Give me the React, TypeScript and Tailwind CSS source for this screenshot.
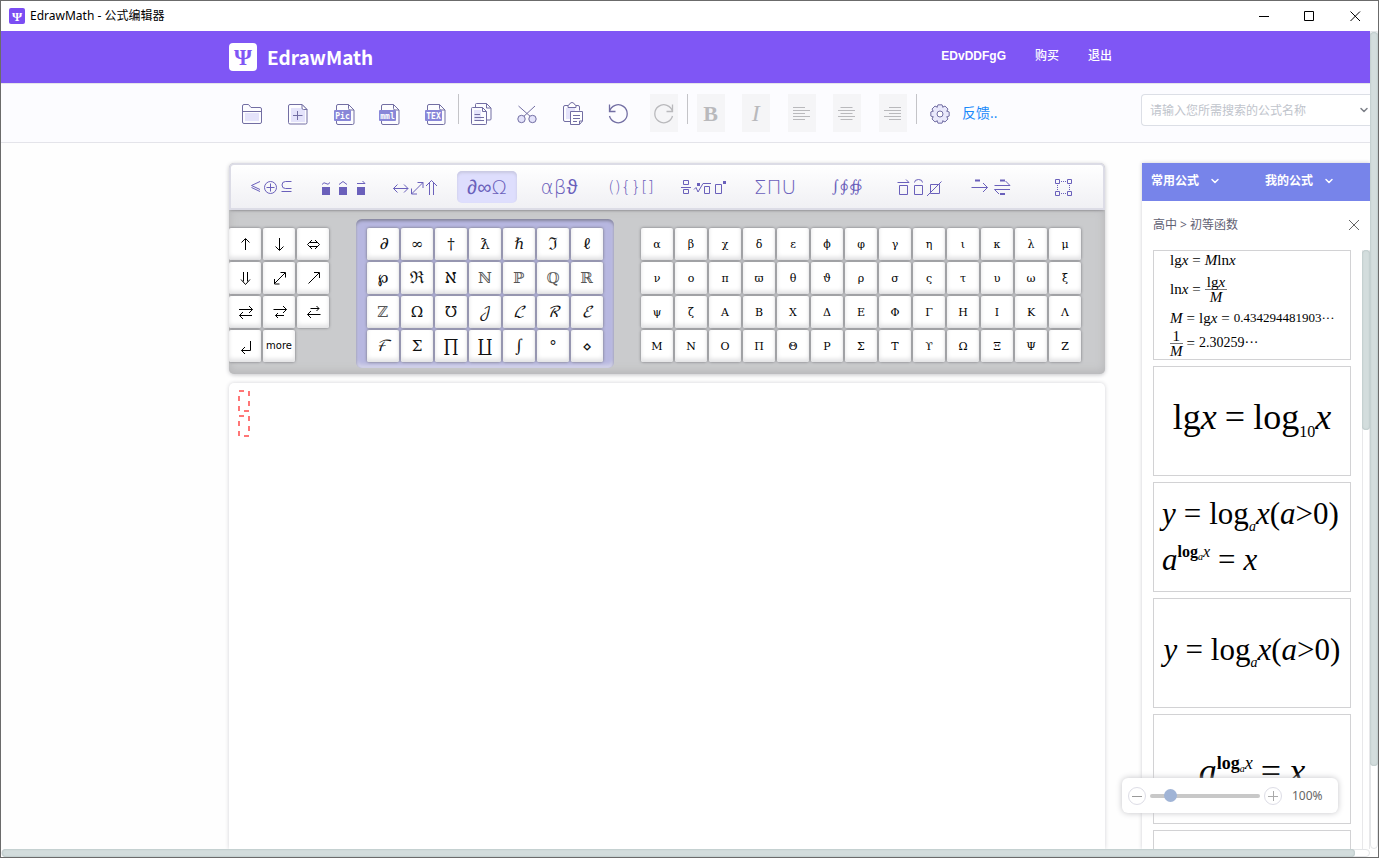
import React, { useState } from "react";
import { ChevronDown } from "lucide-react";
import clsx from "clsx";

interface Tool {
  label: string;
  icon: React.ReactNode;
  disabled?: boolean;
  divider?: boolean;
}

interface PaletteTab {
  label: string;
  content: React.ReactNode;
}

const CJK = "font-['Open_Sans','Noto_Sans_CJK_SC',sans-serif]";

// Outline of the settings cog, eight teeth around (14, 15)
const GEAR_POINTS = Array.from({ length: 8 })
  .flatMap((_, i) => {
    const mid = (i * Math.PI) / 4;
    return [
      [-0.42, 7.4],
      [-0.22, 9.4],
      [0.22, 9.4],
      [0.42, 7.4],
    ].map(([da, r]) => {
      const x = 14 + r * Math.sin(mid + da);
      const y = 15 - r * Math.cos(mid + da);
      return `${x.toFixed(2)},${y.toFixed(2)}`;
    });
  })
  .join(" ");

function ToolIcon({ children, muted }: { children: React.ReactNode; muted?: boolean }) {
  return (
    <svg
      viewBox="0 0 28 28"
      fill="none"
      stroke={muted ? "#b9b9bc" : "#726ea3"}
      className="h-7 w-7"
      aria-hidden="true"
    >
      {children}
    </svg>
  );
}

function FileBadge({ text }: { text: string }) {
  return (
    <ToolIcon>
      <path d="M18.5 5.5H8a1.5 1.5 0 0 0-1.5 1.5V24a1.5 1.5 0 0 0 1.5 1.5H22.5a1.5 1.5 0 0 0 1.5-1.5V11z" />
      <path d="M18.5 5.5V9.5a1.5 1.5 0 0 0 1.5 1.5H24" />
      <rect x="4" y="11" width="17" height="11" rx="1" fill="#8987d8" stroke="none" />
      <text
        x="12.5"
        y="19.5"
        textAnchor="middle"
        fill="#fff"
        stroke="none"
        className="font-['DejaVu_Sans_Mono',monospace] text-[8px] font-bold"
      >
        {text}
      </text>
    </ToolIcon>
  );
}

function AlignIcon({ align }: { align: "left" | "center" | "right" }) {
  const widths = [12, 17, 12, 17, 12];
  return (
    <ToolIcon muted>
      {widths.map((w, i) => {
        const x = align === "left" ? 5 : align === "right" ? 22 - w : 13.5 - w / 2;
        return <path key={i} d={`M${x} ${8.5 + i * 3}h${w}`} />;
      })}
    </ToolIcon>
  );
}

const TOOLS: Tool[] = [
  {
    label: "打开",
    icon: (
      <ToolIcon>
        <rect x="7" y="14" width="14" height="8" fill="#e4e3fb" stroke="none" />
        <path d="M4.5 7a1.5 1.5 0 0 1 1.5-1.5H10.5L13 8.5H22a1.5 1.5 0 0 1 1.5 1.5V23a1.5 1.5 0 0 1-1.5 1.5H6A1.5 1.5 0 0 1 4.5 23zM4.5 12.5H23.5" />
      </ToolIcon>
    ),
  },
  {
    label: "新建",
    icon: (
      <ToolIcon>
        <rect x="7" y="9" width="14" height="14" fill="#e4e3fb" stroke="none" />
        <path d="M18 5.5H6a1.5 1.5 0 0 0-1.5 1.5V23.5A1.5 1.5 0 0 0 6 25H21.5A1.5 1.5 0 0 0 23 23.5V10.5z" />
        <path d="M18 5.5V9a1.5 1.5 0 0 0 1.5 1.5H23z" fill="#fff" />
        <path d="M9 16.5H18.5M13.5 12V21" />
      </ToolIcon>
    ),
  },
  { label: "导出图片", icon: <FileBadge text="Pic" /> },
  { label: "导出 MathML", icon: <FileBadge text="mml" /> },
  { label: "导出 TeX", icon: <FileBadge text="TEX" /> },
  {
    label: "复制",
    divider: true,
    icon: (
      <ToolIcon>
        <path d="M8.5 8V5.5a1 1 0 0 1 1-1H19.5L24 9V20a1 1 0 0 1-1 1H19.5M19.5 4.5V9H24" />
        <rect x="7" y="11" width="7" height="11" fill="#e4e3fb" stroke="none" />
        <path d="M15.5 8.5H5.5a1 1 0 0 0-1 1V24.5a1 1 0 0 0 1 1H18.5a1 1 0 0 0 1-1V12.5zM15.5 8.5V12.5H19.5" />
        <path d="M7.5 15.5H13M7.5 18.5H17M7.5 21.5H17" />
      </ToolIcon>
    ),
  },
  {
    label: "剪切",
    icon: (
      <ToolIcon>
        <circle cx="8.5" cy="20" r="3.7" fill="#e4e3fb" />
        <circle cx="19.5" cy="20" r="3.7" fill="#e4e3fb" />
        <path d="M5.5 7L17 17.2M22 7L11 17.2" />
      </ToolIcon>
    ),
  },
  {
    label: "粘贴",
    icon: (
      <ToolIcon>
        <rect x="7" y="9" width="9" height="11" fill="#e4e3fb" stroke="none" />
        <path d="M9 6.5H6a1.5 1.5 0 0 0-1.5 1.5V21A1.5 1.5 0 0 0 6 22.5H11M17 6.5H19A1.5 1.5 0 0 1 20.5 8V11.5" />
        <path d="M9 8.5V6.5L10.5 5.5Q11 3.5 13 3.5Q15 3.5 15.5 5.5L17 6.5V8.5z" fill="#fff" />
        <path d="M11.5 12.5H23.5V22L20.5 25.5H11.5z" fill="#fff" />
        <path d="M23.5 22H20.5V25.5M14 16.5H21M14 19.5H21M14 22.5H18" />
      </ToolIcon>
    ),
  },
  {
    label: "撤销",
    icon: (
      <ToolIcon>
        <path d="M5.5 5.5V12.5H11.5M5.5 12.5A9 9 0 1 1 5.5 17" strokeWidth="1.3" />
      </ToolIcon>
    ),
  },
  {
    label: "重做",
    disabled: true,
    icon: (
      <ToolIcon muted>
        <path d="M22.5 5.5V12.5H16.5M22.5 12.5A9 9 0 1 0 22.5 17" strokeWidth="1.3" />
      </ToolIcon>
    ),
  },
  {
    label: "加粗",
    disabled: true,
    divider: true,
    icon: <span className="font-['Liberation_Serif',serif] text-[22px] font-bold">B</span>,
  },
  {
    label: "斜体",
    disabled: true,
    icon: <span className="font-['Liberation_Serif',serif] text-2xl italic">I</span>,
  },
  { label: "左对齐", disabled: true, icon: <AlignIcon align="left" /> },
  { label: "居中", disabled: true, icon: <AlignIcon align="center" /> },
  { label: "右对齐", disabled: true, icon: <AlignIcon align="right" /> },
  {
    label: "设置",
    divider: true,
    icon: (
      <ToolIcon>
        <polygon points={GEAR_POINTS} fill="#e9e8fb" strokeLinejoin="round" />
        <circle cx="14" cy="15" r="3" fill="#fff" />
      </ToolIcon>
    ),
  },
];

function TabIcon({ children }: { children: React.ReactNode }) {
  return (
    <svg
      viewBox="-30 -16 60 32"
      fill="none"
      stroke="#6a60bb"
      className="h-8 w-[60px]"
      aria-hidden="true"
    >
      {children}
    </svg>
  );
}

const LIGHT = "font-['DejaVu_Sans_Light','DejaVu_Sans',sans-serif]";
const MATH = "font-['DejaVu_Math_TeX_Gyre','DejaVu_Serif',serif]";

function TabText({ children, className }: { children: React.ReactNode; className: string }) {
  return (
    <span className={clsx("leading-8 font-extralight whitespace-nowrap", className)}>
      {children}
    </span>
  );
}

const TABS: PaletteTab[] = [
  {
    label: "关系符号",
    content: (
      <TabIcon>
        <path d="M-11-5.5L-19.5-1.5L-11 2.5M-19.5.5L-11 4.5" />
        <circle cx="-.5" cy=".5" r="6" />
        <path d="M-4.5.5H3.5M-.5-3.5V4.5M20.5-5.5H14.5a3.5 3.5 0 0 0 0 7H20.5M10.5 4.5H20.5" />
      </TabIcon>
    ),
  },
  {
    label: "修饰符号",
    content: (
      <TabIcon>
        <path d="M-21 0h8v8h-8zM-4 0h8v8h-8zM14 0h8v8h-8z" fill="#6a60bb" stroke="none" />
        <path d="M-21-2.5q2-3 4-1t4-1M-4-2.5L0-5.5L4-2.5M14-3.5H22L19.5-6" />
      </TabIcon>
    ),
  },
  {
    label: "箭头符号",
    content: (
      <TabIcon>
        <path d="M-21.5 1.5H-7M-17.5-2.5L-21.5 1.5L-17.5 5.5M-11-2.5L-7 1.5L-11 5.5" />
        <path d="M-3.5 7L8-4.5M2.5-4.5H8V1M-3.5 1.5V7H2" />
        <path d="M14.5 8V-4M18.5 8V-4M11-1L16.5-6.5L22-1" />
      </TabIcon>
    ),
  },
  { label: "杂项符号", content: <TabText className={clsx(LIGHT, "text-xl")}>∂∞Ω</TabText> },
  { label: "希腊字母", content: <TabText className={clsx(LIGHT, "text-xl")}>αβϑ</TabText> },
  { label: "括号", content: <TabText className={clsx(LIGHT, "text-base")}>(){"{}"}[]</TabText> },
  {
    label: "分式和根式",
    content: (
      <TabIcon>
        <path d="M-19.5-6.5h5v4h-5zM-22 .5h10M-19.5 2.5h5v4h-5z" />
        <path d="M-9 2.5L-7 .5L-5 5L0-3.5H8M1.5-.5h5v7h-5zM12.5-2.5h6v9h-6z" />
        <path d="M-6-4h3v3h-3zM20-6h3v3h-3z" fill="#6a60bb" stroke="none" />
      </TabIcon>
    ),
  },
  { label: "求和", content: <TabText className={clsx(LIGHT, "text-xl")}>ΣΠU</TabText> },
  { label: "积分", content: <TabText className={clsx(MATH, "text-sm")}>∫∮∯</TabText> },
  {
    label: "上下划线",
    content: (
      <TabIcon>
        <path d="M-19.5-1.5h8v9h-8zM-4.5-1.5h8v9h-8zM11.5-2.5h9v9h-9z" />
        <path d="M-21.5-4.5H-10L-13-7.5M-4.5-4.5q0-3 4-3t4 3M8 9L22.5-5.5" />
      </TabIcon>
    ),
  },
  {
    label: "标签箭头",
    content: (
      <TabIcon>
        <path d="M-19.5.5H-3.5M-8-4L-3.5.5L-8 5M3.5-1.5H19L14.5-6M19 2.5H3.5L8 7" />
        <path d="M-16-6.5h5M9-6.5h5M9 7h5" strokeWidth="2" />
      </TabIcon>
    ),
  },
  {
    label: "矩阵",
    content: (
      <TabIcon>
        <path d="M-7.5-7.5h4v4h-4zM4.5-7.5h4v4h-4zM-7.5 4.5h4v4h-4zM4.5 4.5h4v4h-4z" />
        <path d="M-2-5.5H4M-2 6.5H4M-5.5-2V4M6.5-2V4" strokeDasharray="1 1" />
      </TabIcon>
    ),
  },
];

// Drawn on a 32px key, centre (16, 16)
const ARROW_KEYS = [
  { label: "上箭头", path: "M16.5 22V11M12.5 14.5L16.5 10.5L20.5 14.5" },
  { label: "下箭头", path: "M16.5 10V22M12.5 18.5L16.5 22.5L20.5 18.5" },
  { label: "双线左右箭头", path: "M12 14.5H21M12 18.5H21M15 12L10.5 16.5L15 21M18 12L22.5 16.5L18 21" },
  { label: "双线下箭头", path: "M14.5 10V19.5M18.5 10V19.5M12 17.5L16.5 22.5L21 17.5" },
  { label: "双向斜箭头", path: "M11.5 21.5L22 11M17.5 10.5H22.5V15.5M11.5 17V22H16.5" },
  { label: "斜箭头", path: "M11.5 21.5L22 11M17 10.5H22.5V16" },
  { label: "左右双箭头", path: "M10 13.5H23.5M20 10L23.5 13.5L20 17M23 19.5H10.5M14 16L10.5 19.5L14 23" },
  { label: "右长双箭头", path: "M10.5 13.5H23.5M20 10L23.5 13.5L20 17M21 19.5H12.5L15 22M12.5 19.5L15 17" },
  { label: "左长双箭头", path: "M13.5 12.5H22M19.5 10L22 12.5L19.5 15M23.5 18.5H10.5M14 15L10.5 18.5L14 22" },
  { label: "回车", path: "M21.5 11V20.5H12.5M16 17L12.5 20.5L16 24" },
];

const MISC_KEYS = [..."∂∞†ƛℏℑℓ℘ℜℵℕℙℚℝℤΩ℧𝒥ℒℛℰℱΣ∏∐∫°⋄"];
const SLANTED_KEYS = [..."∂ℒℛℰℱ"];
const DOUBLE_STRUCK_KEYS = [..."ℕℙℚℝℤ"];

const GREEK_KEYS = [..."αβχδεϕφγηικλμνοπϖθϑρσςτυωξψζΑΒΧΔΕΦΓΗΙΚΛΜΝΟΠΘΡΣΤϒΩΞΨΖ"];

function Key({
  label,
  className,
  children,
}: {
  label: string;
  className?: string;
  children: React.ReactNode;
}) {
  return (
    <button
      type="button"
      aria-label={label}
      className={clsx(
        "flex h-8 w-8 items-center justify-center rounded-xs bg-white leading-none shadow-[0_0_3px_#6e6e74,inset_0_-3px_4px_#e2e2e4]",
        className
      )}
    >
      {children}
    </button>
  );
}

function Palette() {
  const [active, setActive] = useState("杂项符号");

  return (
    <section className="overflow-hidden rounded-[5px] bg-[#cacbcd] shadow-[0_1px_4px_#c4c4c8]">
      <div className="grid h-[47px] grid-cols-12 items-center rounded-t-[5px] border-2 border-[#dcdce6] bg-linear-to-b from-white to-[#f0f0f4] px-1 shadow-[0_2px_2px_-1px_#8a8a8e]">
        {TABS.map((tab) => (
          <button
            key={tab.label}
            type="button"
            aria-label={tab.label}
            onClick={() => setActive(tab.label)}
            className={clsx(
              "mx-auto flex h-8 w-[60px] items-center justify-center rounded-[5px] text-[#6a60bb]",
              active === tab.label && "bg-[#dedefd] shadow-[inset_0_2px_3px_#c8c8e0]"
            )}
          >
            {tab.content}
          </button>
        ))}
      </div>

      <div className="flex h-[164px] items-start gap-[27px] pt-[9px] shadow-[inset_0_-2px_10px_#b4b4b6]">
        <div className="mt-[9px] grid shrink-0 grid-cols-3 gap-0.5">
          {ARROW_KEYS.map((key) => (
            <Key key={key.label} label={key.label}>
              <svg viewBox="0 0 32 32" fill="none" stroke="#000" className="h-8 w-8">
                <path d={key.path} />
              </svg>
            </Key>
          ))}
          <Key label="more" className="font-['DejaVu_Sans',sans-serif] text-[10px] text-black">
            more
          </Key>
        </div>

        <div className="grid shrink-0 grid-cols-7 gap-0.5 rounded-md bg-[#b7b7e0] px-[11px] pt-[9px] pb-1.5 shadow-[inset_0_2px_3px_#85859c,inset_0_-3px_4px_#d6d6ea]">
          {MISC_KEYS.map((char) => (
            <Key
              key={char}
              label={char}
              className={clsx(
                "font-['DejaVu_Math_TeX_Gyre','DejaVu_Serif','DejaVu_Sans',serif] text-[15px]",
                SLANTED_KEYS.includes(char) && "italic",
                DOUBLE_STRUCK_KEYS.includes(char) ? "text-[#555]" : "text-[#111]"
              )}
            >
              {char}
            </Key>
          ))}
        </div>

        <div className="mt-[9px] grid shrink-0 grid-cols-13 gap-0.5">
          {GREEK_KEYS.map((char) => (
            <Key key={char} label={char} className="font-['DejaVu_Serif',serif] text-[11px] text-black">
              {char}
            </Key>
          ))}
        </div>
      </div>
    </section>
  );
}

function Editor() {
  return (
    <section className="mt-[9px] flex-1 rounded-t-[5px] bg-white px-2 py-[7px] shadow-[0_0_4px_#d4d4d8]">
      <svg
        width="14"
        height="48"
        viewBox="0 0 14 48"
        stroke="#ff7676"
        strokeWidth="2"
        fill="none"
        aria-label="公式占位符"
      >
        <path d="M2 1H7M12 1V6M12 11V16M2 6V11M2 16V21M7 21H12" />
        <path d="M2 26H7M12 26V31M12 36V41M2 31V36M2 41V46M7 46H12" />
      </svg>
    </section>
  );
}

function Equals({ className = "mx-2" }: { className?: string }) {
  return <span className={className}>=</span>;
}

function Fraction({ top, bottom }: { top: React.ReactNode; bottom: React.ReactNode }) {
  return (
    <span className="flex flex-col text-center leading-[14px]">
      <span className="border-b border-[#777] px-0.5">{top}</span>
      <span>{bottom}</span>
    </span>
  );
}

function LogPower({ large }: { large?: boolean }) {
  return (
    <div className="flex items-center whitespace-nowrap">
      <i>a</i>
      <span className={clsx("self-start font-bold", large ? "text-lg leading-6" : "text-base leading-5")}>
        log
        <sub className="text-[10px] font-normal italic">a</sub>
        <i className="font-normal">x</i>
      </span>
      <Equals />
      <i>x</i>
    </div>
  );
}

function LogLine() {
  return (
    <div className="whitespace-nowrap">
      <i>y</i>
      <Equals />
      log
      <sub className="bottom-[-0.5em] text-sm leading-none italic">a</sub>
      <i>x</i>(<i>a</i>&gt;0)
    </div>
  );
}

const FORMULAS = [
  {
    id: "lg-ln",
    className: "flex flex-col pl-4 text-[15px] leading-[18px] whitespace-nowrap",
    body: (
      <>
        <div className="flex h-[18px] items-center">
          lg<i>x</i>
          <Equals className="mx-1" />
          <i>M</i>ln<i>x</i>
        </div>
        <div className="flex h-10 items-center">
          ln<i>x</i>
          <Equals className="mx-1" />
          <Fraction top={<>lg<i>x</i></>} bottom={<i>M</i>} />
        </div>
        <div className="flex h-[18px] items-center">
          <i>M</i>
          <Equals className="mx-1" />
          lg<i>x</i>
          <Equals className="mx-1" />
          <span className="text-[13px]">0.434294481903···</span>
        </div>
        <div className="flex h-8 items-center">
          <Fraction top="1" bottom={<i>M</i>} />
          <Equals className="mx-1" />
          <span className="text-sm">2.30259···</span>
        </div>
      </>
    ),
  },
  {
    id: "lg",
    className: "flex items-center justify-center pb-2 text-[36px] leading-10",
    body: (
      <div className="whitespace-nowrap">
        lg<i>x</i>
        <Equals />
        log
        <sub className="bottom-[-0.5em] text-base leading-none">10</sub>
        <i>x</i>
      </div>
    ),
  },
  {
    id: "log-pair",
    className: "flex flex-col justify-center gap-2.5 px-2 text-[31px] leading-9",
    body: (
      <>
        <LogLine />
        <LogPower />
      </>
    ),
  },
  {
    id: "log",
    className: "flex items-center justify-center pb-1.5 text-[31px] leading-9",
    body: <LogLine />,
  },
  {
    id: "power",
    className: "flex items-center justify-center pt-1 text-[36px] leading-10",
    body: <LogPower large />,
  },
  { id: "next", className: "", body: null },
];

function FormulaPanel() {
  return (
    <aside className={clsx("flex w-[228px] shrink-0 flex-col bg-white text-xs shadow-[0_0_4px_#cfcfd4]", CJK)}>
      <div className="flex h-[38px] items-center bg-[#7784ea] pb-0.5 font-bold text-white">
        <button type="button" className="flex w-1/2 items-center gap-2.5 pl-[9px]">
          常用公式
          <ChevronDown size={12} strokeWidth={3} />
        </button>
        <button type="button" className="flex w-1/2 items-center gap-2.5 pl-[9px]">
          我的公式
          <ChevronDown size={12} strokeWidth={3} />
        </button>
      </div>

      <div className="flex h-[49px] items-center justify-between px-[11px] pb-0.5 text-[#5f6173]">
        <span>高中 &gt; 初等函数</span>
        <button type="button" aria-label="关闭">
          <svg width="10" height="10" viewBox="0 0 10 10" stroke="#666">
            <path d="M0 0L10 10M10 0L0 10" />
          </svg>
        </button>
      </div>

      <div className="flex min-h-0 flex-1 overflow-hidden">
        <div className="flex flex-1 flex-col gap-1.5 px-[11px]">
          {FORMULAS.map((formula) => (
            <div
              key={formula.id}
              className={clsx(
                "h-[110px] shrink-0 border border-[#d2d2d4] font-['Liberation_Serif',serif] text-black",
                formula.className
              )}
            >
              {formula.body}
            </div>
          ))}
        </div>
        <div className="w-2 shrink-0 border-x border-[#e8e8ea]">
          <div className="-mx-px h-[180px] rounded bg-[#d3dddd] shadow-[inset_0_0_2px_#9fb0b0]" />
        </div>
      </div>
    </aside>
  );
}

function ZoomBar() {
  const [zoom, setZoom] = useState(100);

  return (
    <div className="absolute right-10 bottom-11 flex h-[35px] w-[216px] items-center gap-1 rounded-md bg-white px-1.5 shadow-[0_0_6px_#c4c4c8]">
      <button
        type="button"
        aria-label="缩小"
        onClick={() => setZoom(Math.max(40, zoom - 10))}
        className="flex h-[18px] w-[18px] items-center justify-center rounded-full border border-[#dddde6]"
      >
        <svg width="10" height="10" viewBox="0 0 10 10" stroke="#999">
          <path d="M0 5.5H10" />
        </svg>
      </button>
      <input
        type="range"
        aria-label="缩放"
        min={40}
        max={460}
        value={zoom}
        onChange={(e) => setZoom(Number(e.target.value))}
        className="h-1 w-[110px] appearance-none rounded-full bg-[#c8c8c8] [&::-webkit-slider-thumb]:h-[13px] [&::-webkit-slider-thumb]:w-[13px] [&::-webkit-slider-thumb]:appearance-none [&::-webkit-slider-thumb]:rounded-full [&::-webkit-slider-thumb]:bg-[#a0b4d6]"
      />
      <button
        type="button"
        aria-label="放大"
        onClick={() => setZoom(Math.min(460, zoom + 10))}
        className="flex h-[18px] w-[18px] items-center justify-center rounded-full border border-[#dddde6]"
      >
        <svg width="10" height="10" viewBox="0 0 10 10" stroke="#aaa">
          <path d="M0 5.5H10M5.5 0V10" />
        </svg>
      </button>
      <span className="ml-1.5 font-['Noto_Sans',sans-serif] text-xs leading-none text-[#666]">{zoom}%</span>
    </div>
  );
}

function TitleBar() {
  return (
    <div className="flex h-[30px] shrink-0 items-center bg-white pl-2 text-xs text-black">
      <span className="flex h-4 w-4 items-center justify-center rounded-xs bg-[#7b4df3] font-['Liberation_Serif',serif] text-[13px] leading-none font-bold text-white">
        Ψ
      </span>
      <span className="ml-[5px] font-['Noto_Sans','Noto_Sans_CJK_SC',sans-serif]">
        EdrawMath - 公式编辑器
      </span>
      <div className="ml-auto flex">
        <button type="button" aria-label="最小化" className="flex h-7 w-[46px] items-center justify-center">
          <svg width="11" height="11" viewBox="0 0 11 11" stroke="#000">
            <path d="M1 5.5H11" />
          </svg>
        </button>
        <button type="button" aria-label="最大化" className="flex h-7 w-[46px] items-center justify-center">
          <svg width="11" height="11" viewBox="0 0 11 11" stroke="#000" fill="none">
            <path d="M.5.5H9.5V9.5H.5z" />
          </svg>
        </button>
        <button type="button" aria-label="关闭窗口" className="flex h-7 w-[46px] items-center justify-center">
          <svg width="11" height="11" viewBox="0 0 11 11" stroke="#000">
            <path d="M.5.5L10 10M10 .5L.5 10" />
          </svg>
        </button>
      </div>
    </div>
  );
}

function Header() {
  return (
    <header className="flex h-[52px] shrink-0 items-center bg-[#7f56f5] pr-[258px] pl-[228px] text-white">
      <span className="flex h-7 w-7 items-center justify-center rounded bg-white font-['Liberation_Serif',serif] text-[23px] leading-none font-bold text-[#7f56f5]">
        Ψ
      </span>
      <span className="ml-2.5 pb-0.5 font-['Noto_Sans_CJK_SC',sans-serif] text-[19px] leading-none font-bold">
        EdrawMath
      </span>
      <nav className="ml-auto flex items-center gap-[29px] pb-0.5 font-['Roboto','Noto_Sans_CJK_SC',sans-serif] text-xs font-medium">
        <a href="#account" className="font-['Liberation_Sans',sans-serif] font-bold">EDvDDFgG</a>
        <a href="#buy">购买</a>
        <a href="#logout">退出</a>
      </nav>
    </header>
  );
}

function Toolbar() {
  return (
    <div className="flex h-[60px] shrink-0 items-start justify-between overflow-hidden border-t border-b border-[#e4e4ea] bg-[#fcfcff] pt-2.5 pl-[228px]">
      <div className="flex items-start">
        <div className="grid w-[733px] grid-cols-16">
          {TOOLS.map((tool) => (
            <div key={tool.label} className="flex items-start">
              {tool.divider && <span className="h-[30px] w-px bg-[#c4c4c8]" />}
              <button
                type="button"
                aria-label={tool.label}
                disabled={tool.disabled}
                className={clsx(
                  "mx-auto flex h-[38px] w-7 items-center justify-center",
                  tool.disabled && "bg-[#f5f5f7] text-[#b9b9bc]"
                )}
              >
                {tool.icon}
              </button>
            </div>
          ))}
        </div>
        <a href="#feedback" className={clsx("text-sm leading-[38px] text-[#1989fa]", CJK)}>
          反馈..
        </a>
      </div>

      <div className="flex h-8 w-[229px] shrink-0 items-center rounded-l border border-r-0 border-[#dcdfe6] bg-white">
        <input
          type="text"
          aria-label="搜索公式"
          placeholder="请输入您所需搜索的公式名称"
          className={clsx("min-w-0 flex-1 pt-px pl-2 text-xs outline-none placeholder:text-[#c0c4cc]", CJK)}
        />
        <button type="button" aria-label="展开" className="text-[#7d8088]">
          <ChevronDown size={12} strokeWidth={3} />
        </button>
      </div>
    </div>
  );
}

export default function App() {
  return (
    <div className="relative flex h-screen flex-col overflow-hidden border border-[#6b6b6b] bg-white">
      <TitleBar />

      <div className="flex min-h-0 flex-1">
        <div className="flex min-w-0 flex-1 flex-col overflow-hidden">
          <Header />
          <Toolbar />
          <div className="flex min-h-0 flex-1 gap-[37px] bg-[#fefefe] pt-5 pl-[228px]">
            <main className="flex min-w-0 flex-1 flex-col">
              <Palette />
              <Editor />
            </main>
            <FormulaPanel />
          </div>
        </div>
        <div className="w-2 shrink-0 rounded-b border border-[#e4e6e8] bg-white">
          <div className="-mx-px h-[90%] rounded bg-[#d3dddd] shadow-[inset_0_0_2px_#9fb0b0]" />
        </div>
      </div>

      <div className="mr-2 h-2 shrink-0 rounded border border-[#e4e6e8] bg-white">
        <div className="-mt-px h-2 w-[99%] rounded bg-[#d3dddd] shadow-[inset_0_0_2px_#9fb0b0]" />
      </div>

      <ZoomBar />
    </div>
  );
}
